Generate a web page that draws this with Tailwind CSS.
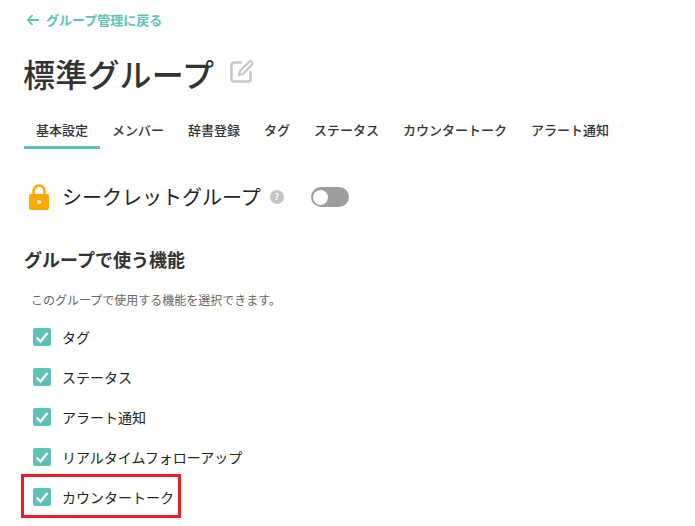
<!DOCTYPE html>
<html lang="ja">
<head>
  <meta charset="UTF-8">
  <title>標準グループ</title>
  <script src="https://cdn.jsdelivr.net/npm/@tailwindcss/browser@4"></script>
</head>
<body class="bg-white h-[526px] overflow-hidden font-['Noto_Sans_CJK_JP','Noto_Sans',sans-serif] text-[#333]">
  <div class="pl-6 pt-3">
    <a class="flex items-center h-[18px] -mt-[1px] text-[13px] font-bold text-[#5fc2ba]">
      <svg class="w-4 h-4 ml-[1px] mr-[5px]" viewBox="0 0 16 16" fill="none" stroke="#5fc2ba" stroke-width="1.800"><path d="M14 8H3M7.500 3 3 8l4.500 5"/></svg>
      グループ管理に戻る
    </a>

    <div class="flex items-center mt-[22px] h-[44px]">
      <h1 class="text-[32px] leading-[44px] font-medium -ml-[1px] tracking-[0.2px]">標準グループ</h1>
      <svg class="w-6 h-6 ml-[16px] -mt-[4px]" viewBox="0 0 24 24" fill="none" stroke="#c8c8c8" stroke-width="2.600" stroke-linecap="round"><path d="M11 3.500H4a2.500 2.500 0 0 0-2.500 2.500v14A2.500 2.500 0 0 0 4 22.500h14a2.500 2.500 0 0 0 2.500-2.500v-7"/><path d="M19.500 2.500a2 2 0 0 1 2.500 3L13 15l-4 1 1-4z" stroke-width="2.200"/></svg>
    </div>

    <div class="flex mt-[21px] text-[13px] font-medium text-[#333]">
      <div class="px-3 h-[33px] pt-[5px] leading-[18px] border-b-[3px] border-[#5fc2ba]">基本設定</div>
      <div class="px-3 pt-[5px] leading-[18px]">メンバー</div>
      <div class="px-3 pt-[5px] leading-[18px]">辞書登録</div>
      <div class="px-3 pt-[5px] leading-[18px]">タグ</div>
      <div class="px-3 pt-[5px] leading-[18px]">ステータス</div>
      <div class="px-3 pt-[5px] leading-[18px]">カウンタートーク</div>
      <div class="px-3 pt-[5px] leading-[18px]">アラート通知</div>
    </div>

    <div class="flex items-center mt-[30px] h-[36px]">
      <svg class="w-[22px] h-[28px] ml-[4px]" viewBox="0 0 22 28"><path d="M5.500 13V8a5.500 5.500 0 0 1 11 0v5" fill="none" stroke="#ffa800" stroke-width="2.500"/><rect x="1" y="11" width="20" height="16" rx="2" fill="#ffa800"/><circle cx="11" cy="19" r="2" fill="#fff"/></svg>
      <span class="ml-[12px] text-[20px] -mt-[1px] font-normal text-[#222]">シークレットグループ</span>
      <span class="ml-[9px] w-[14px] h-[14px] rounded-full bg-[#c4c4c4] text-white text-[9px] font-bold flex items-center justify-center">?</span>
      <span class="ml-[27px] w-[38px] h-5 rounded-full bg-[#9e9e9e] flex items-center pl-[2px]"><span class="w-[15px] h-[15px] rounded-full bg-white"></span></span>
    </div>

    <h2 class="mt-[32px] text-[18px] leading-6 font-bold">グループで使う機能</h2>
    <p class="mt-[21px] ml-[7px] text-[12px] leading-4 text-[#666]">このグループで使用する機能を選択できます。</p>

    <ul class="mt-[9px] text-[14px] font-normal text-[#222]">
      <li class="flex items-center h-10 ml-[9px]">
        <span class="w-[18px] h-[18px] rounded-[2px] bg-[#5fc2ba] flex items-center justify-center"><svg class="w-[14px] h-[14px]" viewBox="0 0 14 14" fill="none" stroke="#fff" stroke-width="2.200"><path d="M1.500 7.500 5.500 11.500 12.500 3"/></svg></span>
        <span class="ml-[11px]">タグ</span>
      </li>
      <li class="flex items-center h-10 ml-[9px]">
        <span class="w-[18px] h-[18px] rounded-[2px] bg-[#5fc2ba] flex items-center justify-center"><svg class="w-[14px] h-[14px]" viewBox="0 0 14 14" fill="none" stroke="#fff" stroke-width="2.200"><path d="M1.500 7.500 5.500 11.500 12.500 3"/></svg></span>
        <span class="ml-[11px]">ステータス</span>
      </li>
      <li class="flex items-center h-10 ml-[9px]">
        <span class="w-[18px] h-[18px] rounded-[2px] bg-[#5fc2ba] flex items-center justify-center"><svg class="w-[14px] h-[14px]" viewBox="0 0 14 14" fill="none" stroke="#fff" stroke-width="2.200"><path d="M1.500 7.500 5.500 11.500 12.500 3"/></svg></span>
        <span class="ml-[11px]">アラート通知</span>
      </li>
      <li class="flex items-center h-10 ml-[9px]">
        <span class="w-[18px] h-[18px] rounded-[2px] bg-[#5fc2ba] flex items-center justify-center"><svg class="w-[14px] h-[14px]" viewBox="0 0 14 14" fill="none" stroke="#fff" stroke-width="2.200"><path d="M1.500 7.500 5.500 11.500 12.500 3"/></svg></span>
        <span class="ml-[11px]">リアルタイムフォローアップ</span>
      </li>
      <li class="relative flex items-center h-10 ml-[9px]">
        <span class="w-[18px] h-[18px] rounded-[2px] bg-[#5fc2ba] flex items-center justify-center"><svg class="w-[14px] h-[14px]" viewBox="0 0 14 14" fill="none" stroke="#fff" stroke-width="2.200"><path d="M1.500 7.500 5.500 11.500 12.500 3"/></svg></span>
        <span class="ml-[11px]">カウンタートーク</span>
        <div class="absolute left-[-12px] top-[-3px] w-[160px] h-[44px] border-[3px] border-[#ed1c24]"></div>
      </li>
    </ul>
  </div>
</body>
</html>
